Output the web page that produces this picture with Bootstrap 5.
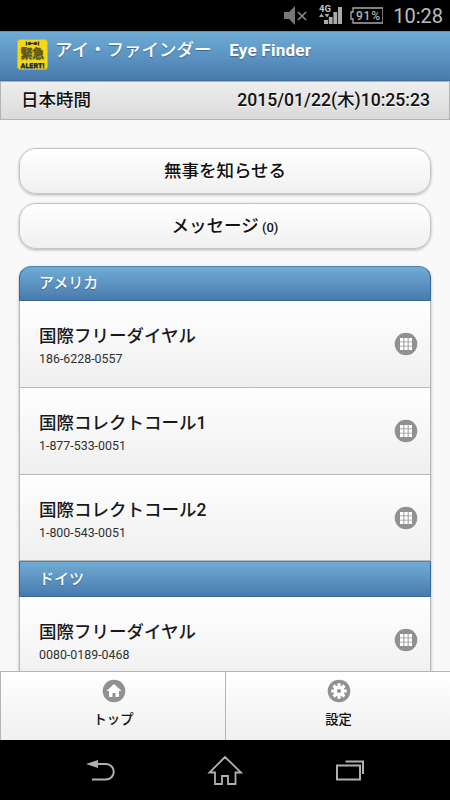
<!DOCTYPE html>
<html lang="ja">
<head>
<meta charset="utf-8">
<meta name="viewport" content="width=device-width, initial-scale=1">
<title>アイ・ファインダー Eye Finder</title>
<link href="https://cdn.jsdelivr.net/npm/bootstrap@5.3.0/dist/css/bootstrap.min.css" rel="stylesheet">
<style>
body{font-family:Roboto,"Noto Sans CJK JP",sans-serif;background:#f9f9f9;color:#111;height:800px;width:450px}
svg{display:block;flex:none}
.status-bar{height:31px;color:#b4b4b4;padding-right:7px}
.clock{font-size:20px;line-height:31px;margin-left:10px;padding-top:2px;color:#bdbdbd}
.blue-bar{background:linear-gradient(#6facd5,#497bae);color:#fff;text-shadow:0 1px 1px #3e6790}
.app-header{height:50px;padding:7px 17px;border-top:1px solid #5b94b9;border-bottom:1px solid #456f9a}
.app-title{font-size:17px;line-height:22px;font-weight:700;margin-left:7px;white-space:pre;letter-spacing:.25px}
.app-title .jp{font-size:17.5px;font-weight:500;letter-spacing:0}
.time-bar{height:39px;background:linear-gradient(#eee,#dadada);border:1px solid #b3b3b3;padding:0 19px 0 20px;font-size:17.5px;font-weight:500;text-shadow:0 1px 0 #fff}
.time-bar .stamp{font-size:17.6px}
.page-body{padding:28px 19px 0}
.pill{height:46px;border:1px solid #c4c4c4;border-radius:17px;background:linear-gradient(#fff,#f0f0f0);box-shadow:0 1px 3px rgba(0,0,0,.3);font-size:17.5px;font-weight:500;color:#111;padding:0;text-shadow:0 1px 0 #fff}
.pill + .pill{margin-top:9px}
.count{font-size:13px}
.dial-list{margin-top:17px;border-radius:12px 12px 0 0;box-shadow:0 1px 3px rgba(0,0,0,.3)}
.group-head{height:35.4px;padding:0 19px;border:1px solid #39678f;border-top-color:#4e86ae;font-size:15px;font-weight:500}
.group-head.first{border-radius:12px 12px 0 0}
.dial-row{height:86.7px;padding:0 12px 0 19px;background:linear-gradient(#fff,#efefef);border:1px solid #b9b9b9;border-top:0;color:#17191c}
.dial-name{font-size:17.5px;line-height:24px;font-weight:500;margin-top:3px}
.dial-number{font-size:12.4px;line-height:16px;margin-top:3px;color:#303030}
.tab-bar{height:69px}
.tab-item{background:linear-gradient(#fff,#f0f0f0);border:1px solid #b5b5b5;border-right:0;border-bottom:0;padding:7px 0 0 1px;color:#111;font-size:13.3px;font-weight:500}
.tab-item span{line-height:20px;margin-top:7px}
.system-nav{height:60px}
</style>
<script src="https://cdn.jsdelivr.net/npm/bootstrap@5.3.0/dist/js/bootstrap.bundle.min.js"></script>
</head>
<body class="d-flex flex-column overflow-hidden">
<svg width="0" height="0" class="position-absolute">
  <symbol id="keypad" viewBox="0 0 24 24"><circle cx="12" cy="12" r="11.3" fill="#919191"/><path fill="#fff" d="M6 6h3.4v3.4H6zM10.3 6h3.4v3.4h-3.4zM14.6 6H18v3.4h-3.4zM6 10.3h3.4v3.4H6zM10.3 10.3h3.4v3.4h-3.4zM14.6 10.3H18v3.4h-3.4zM6 14.6h3.4V18H6zM10.3 14.6h3.4V18h-3.4zM14.6 14.6H18V18h-3.4z"/></symbol>
</svg>
<div class="status-bar bg-black d-flex align-items-center justify-content-end flex-shrink-0">
  <svg width="160" height="31" viewBox="0 0 160 31" fill="#aaa">
    <path fill="#777" d="M61 12h5l6-6v19l-6-6h-5z"/><path stroke="#8a8a8a" stroke-width="1.6" d="m75 12 8 8m0-8-8 8"/>
    <text x="96" y="12" font-size="9.5" font-weight="700" fill="#c4c4c4">4G</text>
    <path d="m96 17 2.500-3.500L101 17zM101.500 14h5l-2.500 3.500zM101 20h4v4h-4zM105.800 17h3.800v7h-3.800zM110.400 12h3.800v12h-3.800zM115 7h4v17h-4z"/>
    <path fill="none" stroke="#aaa" stroke-width="1.300" d="M131 8h30v15h-30v-4h-2v-7h2z" transform="translate(-1)"/>
    <text x="133" y="20" font-size="12" font-weight="500" textLength="24" fill="#b4b4b4">91%</text>
  </svg>
  <span class="clock">10:28</span>
</div>
<header class="blue-bar app-header d-flex align-items-start flex-shrink-0">
  <svg width="31" height="31" viewBox="0 0 31 31"><rect x=".5" y=".5" width="30" height="30" rx="3" fill="#f5d915" stroke="#c6b53b"/><path d="M9.500 2.500v4m12-4v4M11 4.500h9" stroke="#403800" stroke-width="1.500"/><circle cx="12.500" cy="4.500" r="1.700" fill="#403800"/><circle cx="18.500" cy="4.500" r="1.700" fill="#403800"/><text x="3.500" y="18.700" font-size="12.500" font-weight="700" textLength="24" fill="#655700">緊急</text><text x="3.500" y="28.500" font-size="8" font-weight="900" textLength="24" lengthAdjust="spacingAndGlyphs" fill="#30290a">ALERT!</text></svg>
  <div class="app-title"><span class="jp">アイ・ファインダー　</span>Eye Finder</div>
</header>
<div class="time-bar d-flex align-items-center justify-content-between flex-shrink-0"><span>日本時間</span><span class="stamp">2015/01/22(木)10:25:23</span></div>
<main class="page-body flex-grow-1 overflow-hidden">
  <button type="button" class="btn pill w-100 d-block">無事を知らせる</button>
  <button type="button" class="btn pill w-100 d-block">メッセージ<span class="count"> (0)</span></button>
  <section class="dial-list">
    <div class="blue-bar group-head first d-flex align-items-center">アメリカ</div>
    <div class="dial-row d-flex align-items-center justify-content-between"><div><div class="dial-name">国際フリーダイヤル</div><div class="dial-number">186-6228-0557</div></div><svg width="24" height="24"><use href="#keypad"/></svg></div>
    <div class="dial-row d-flex align-items-center justify-content-between"><div><div class="dial-name">国際コレクトコール1</div><div class="dial-number">1-877-533-0051</div></div><svg width="24" height="24"><use href="#keypad"/></svg></div>
    <div class="dial-row d-flex align-items-center justify-content-between"><div><div class="dial-name">国際コレクトコール2</div><div class="dial-number">1-800-543-0051</div></div><svg width="24" height="24"><use href="#keypad"/></svg></div>
    <div class="blue-bar group-head d-flex align-items-center">ドイツ</div>
    <div class="dial-row d-flex align-items-center justify-content-between"><div><div class="dial-name">国際フリーダイヤル</div><div class="dial-number">0080-0189-0468</div></div><svg width="24" height="24"><use href="#keypad"/></svg></div>
  </section>
</main>
<nav class="tab-bar d-flex flex-shrink-0">
  <a href="#" class="tab-item w-50 d-flex flex-column align-items-center text-decoration-none">
    <svg width="24" height="24" viewBox="0 0 24 24"><circle cx="12" cy="12" r="11.300" fill="#919191"/><path fill="#fff" d="m12 5 7.500 7H17v6h-3.500v-4h-3v4H7v-6H4.500z"/></svg>
    <span>トップ</span></a>
  <a href="#" class="tab-item w-50 d-flex flex-column align-items-center text-decoration-none">
    <svg width="24" height="24" viewBox="0 0 24 24"><circle cx="12" cy="12" r="11.300" fill="#919191"/><g stroke="#fff" stroke-width="3.200"><path d="M12 4.200v15.600M4.200 12h15.600M6.500 6.500l11 11M17.500 6.500l-11 11"/></g><circle cx="12" cy="12" r="5.500" fill="#fff"/><circle cx="12" cy="12" r="2.100" fill="#919191"/></svg>
    <span>設定</span></a>
</nav>
<div class="system-nav bg-black flex-shrink-0">
  <svg width="450" height="60" viewBox="0 0 450 60" fill="none" stroke="#b0b0b0" stroke-width="2"><path d="M94 24h12a7.800 7.800 0 0 1 0 15.600H92"/><path d="m86 24 12-4v8z" fill="#b0b0b0" stroke="none"/><path stroke-width="1.800" d="m225 17-15.500 15.500h5.500V44h7v-8h6v8h7.500V32.500h5.500z"/><path d="M337 25.500h23v14h-23zM345.500 21.500H363V34"/></svg>
</div>
</body>
</html>
